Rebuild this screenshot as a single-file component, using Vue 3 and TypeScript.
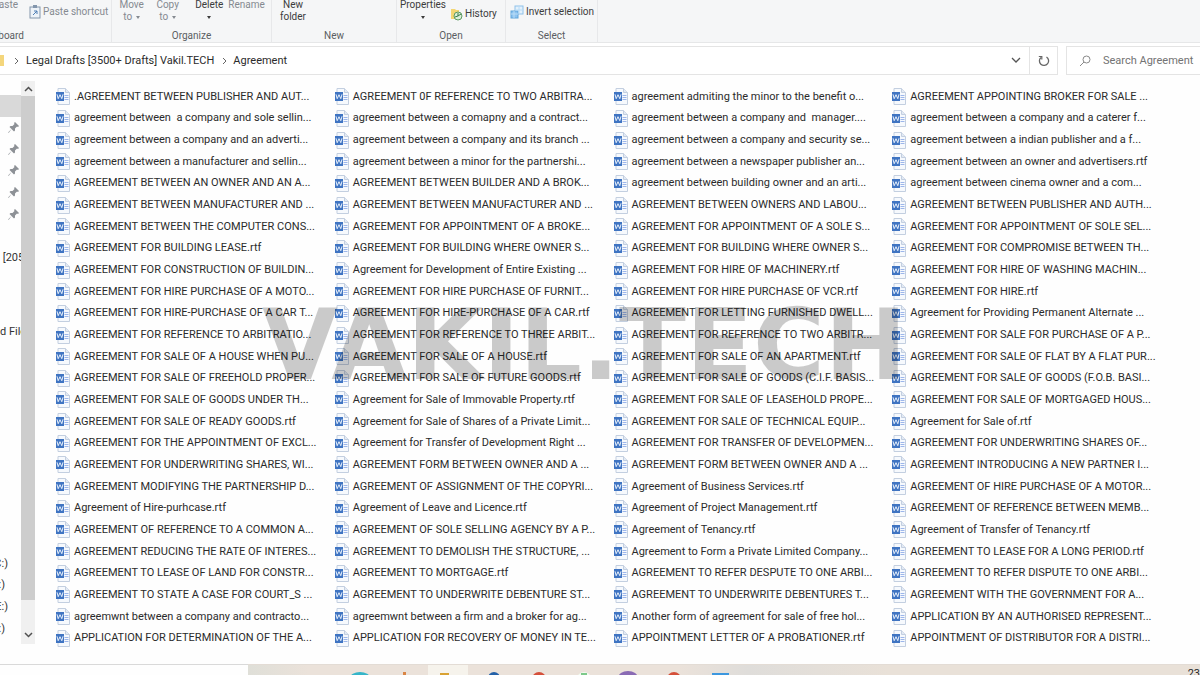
<script setup lang="ts">
import { ref } from 'vue'

const search = ref('')

const columns: string[][] = [
  [
    '.AGREEMENT BETWEEN PUBLISHER AND AUT...',
    'agreement between  a company and sole sellin...',
    'agreement between a company and an adverti...',
    'agreement between a manufacturer and sellin...',
    'AGREEMENT BETWEEN AN OWNER AND AN A...',
    'AGREEMENT BETWEEN MANUFACTURER AND ...',
    'AGREEMENT BETWEEN THE COMPUTER CONS...',
    'AGREEMENT FOR BUILDING LEASE.rtf',
    'AGREEMENT FOR CONSTRUCTION OF BUILDIN...',
    'AGREEMENT FOR HIRE PURCHASE OF A MOTO...',
    'AGREEMENT FOR HIRE-PURCHASE OF A CAR T...',
    'AGREEMENT FOR REFERENCE TO ARBITRATIO...',
    'AGREEMENT FOR SALE OF A HOUSE WHEN PU...',
    'AGREEMENT FOR SALE OF FREEHOLD PROPER...',
    'AGREEMENT FOR SALE OF GOODS UNDER TH...',
    'AGREEMENT FOR SALE OF READY GOODS.rtf',
    'AGREEMENT FOR THE APPOINTMENT OF EXCL...',
    'AGREEMENT FOR UNDERWRITING SHARES, WI...',
    'AGREEMENT MODIFYING THE PARTNERSHIP D...',
    'Agreement of Hire-purhcase.rtf',
    'AGREEMENT OF REFERENCE TO A COMMON A...',
    'AGREEMENT REDUCING THE RATE OF INTERES...',
    'AGREEMENT TO LEASE OF LAND FOR CONSTR...',
    'AGREEMENT TO STATE A CASE FOR COURT_S ...',
    'agreemwnt between a company and contracto...',
    'APPLICATION FOR DETERMINATION OF THE A...',
  ],
  [
    'AGREEMENT 0F REFERENCE TO TWO ARBITRA...',
    'agreement between a comapny and a contract...',
    'agreement between a company and its branch ...',
    'agreement between a minor for the partnershi...',
    'AGREEMENT BETWEEN BUILDER AND A BROK...',
    'AGREEMENT BETWEEN MANUFACTURER AND ...',
    'AGREEMENT FOR APPOINTMENT OF A BROKE...',
    'AGREEMENT FOR BUILDING WHERE OWNER S...',
    'Agreement for Development of Entire Existing ...',
    'AGREEMENT FOR HIRE PURCHASE OF FURNIT...',
    'AGREEMENT FOR HIRE-PURCHASE OF A CAR.rtf',
    'AGREEMENT FOR REFERENCE TO THREE ARBIT...',
    'AGREEMENT FOR SALE OF A HOUSE.rtf',
    'AGREEMENT FOR SALE OF FUTURE GOODS.rtf',
    'Agreement for Sale of Immovable Property.rtf',
    'Agreement for Sale of Shares of a Private Limit...',
    'Agreement for Transfer of Development Right ...',
    'AGREEMENT FORM BETWEEN OWNER AND A ...',
    'AGREEMENT OF ASSIGNMENT OF THE COPYRI...',
    'Agreement of Leave and Licence.rtf',
    'AGREEMENT OF SOLE SELLING AGENCY BY A P...',
    'AGREEMENT TO DEMOLISH THE STRUCTURE, ...',
    'AGREEMENT TO MORTGAGE.rtf',
    'AGREEMENT TO UNDERWRITE DEBENTURE ST...',
    'agreemwnt between a firm and a broker for ag...',
    'APPLICATION FOR RECOVERY OF MONEY IN TE...',
  ],
  [
    'agreement admiting the minor to the benefit o...',
    'agreement between a company and  manager....',
    'agreement between a company and security se...',
    'agreement between a newspaper publisher an...',
    'agreement between building owner and an arti...',
    'AGREEMENT BETWEEN OWNERS AND LABOU...',
    'AGREEMENT FOR APPOINTMENT OF A SOLE S...',
    'AGREEMENT FOR BUILDING WHERE OWNER S...',
    'AGREEMENT FOR HIRE OF MACHINERY.rtf',
    'AGREEMENT FOR HIRE PURCHASE OF VCR.rtf',
    'AGREEMENT FOR LETTING FURNISHED DWELL...',
    'AGREEMENT FOR REFERENCE TO TWO ARBITR...',
    'AGREEMENT FOR SALE OF AN APARTMENT.rtf',
    'AGREEMENT FOR SALE OF GOODS (C.I.F. BASIS...',
    'AGREEMENT FOR SALE OF LEASEHOLD PROPE...',
    'AGREEMENT FOR SALE OF TECHNICAL EQUIP...',
    'AGREEMENT FOR TRANSFER OF DEVELOPMEN...',
    'AGREEMENT FORM BETWEEN OWNER AND A ...',
    'Agreement of Business Services.rtf',
    'Agreement of Project Management.rtf',
    'Agreement of Tenancy.rtf',
    'Agreement to Form a Private Limited Company...',
    'AGREEMENT TO REFER DESPUTE TO ONE ARBI...',
    'AGREEMENT TO UNDERWRITE DEBENTURES T...',
    'Another form of agreement for sale of free hol...',
    'APPOINTMENT LETTER OF A PROBATIONER.rtf',
  ],
  [
    'AGREEMENT APPOINTING BROKER FOR SALE ...',
    'agreement between a company and a caterer f...',
    'agreement between a indian publisher and a f...',
    'agreement between an owner and advertisers.rtf',
    'agreement between cinema owner and a com...',
    'AGREEMENT BETWEEN PUBLISHER AND AUTH...',
    'AGREEMENT FOR APPOINTMENT OF SOLE SEL...',
    'AGREEMENT FOR COMPROMISE BETWEEN TH...',
    'AGREEMENT FOR HIRE OF WASHING MACHIN...',
    'AGREEMENT FOR HIRE.rtf',
    'Agreement for Providing Permanent Alternate ...',
    'AGREEMENT FOR SALE FOR PURCHASE OF A P...',
    'AGREEMENT FOR SALE OF FLAT BY A FLAT PUR...',
    'AGREEMENT FOR SALE OF GOODS (F.O.B. BASI...',
    'AGREEMENT FOR SALE OF MORTGAGED HOUS...',
    'Agreement for Sale of.rtf',
    'AGREEMENT FOR UNDERWRITING SHARES OF...',
    'AGREEMENT INTRODUCING A NEW PARTNER I...',
    'AGREEMENT OF HIRE PURCHASE OF A MOTOR...',
    'AGREEMENT OF REFERENCE BETWEEN MEMB...',
    'Agreement of Transfer of Tenancy.rtf',
    'AGREEMENT TO LEASE FOR A LONG PERIOD.rtf',
    'AGREEMENT TO REFER DISPUTE TO ONE ARBI...',
    'AGREEMENT WITH THE GOVERNMENT FOR A...',
    'APPLICATION BY AN AUTHORISED REPRESENT...',
    'APPOINTMENT OF DISTRIBUTOR FOR A DISTRI...',
  ],
]

const drives: string[] = ['C:)', ':)', 'E:)', ':)']
</script>

<template>
  <div class="window">
    <header class="ribbon">
      <section class="group clipboard">
        <div class="tools">
          <button class="tool paste dim">Paste</button>
          <button class="tool row dim">
            <svg width="12" height="14" viewBox="0 0 12 14">
              <rect x="1" y="2" width="10" height="11" fill="#eef3f8" stroke="#8396ac" />
              <rect x="4" y="0" width="4" height="3" fill="#8396ac" />
              <path d="M4 10l4-4M5 6h3v3" fill="none" stroke="#4f7fb5" />
            </svg>
            Paste shortcut
          </button>
        </div>
        <h2 class="caption">Clipboard</h2>
      </section>
      <section class="group organize">
        <div class="tools">
          <button class="tool dim">Move<span>to <i class="caret"></i></span></button>
          <button class="tool dim">Copy<span>to <i class="caret"></i></span></button>
          <button class="tool">Delete<span><i class="caret"></i></span></button>
          <button class="tool dim">Rename</button>
        </div>
        <h2 class="caption">Organize</h2>
      </section>
      <section class="group new">
        <div class="tools">
          <button class="tool">New<span>folder</span></button>
        </div>
        <h2 class="caption">New</h2>
      </section>
      <section class="group open">
        <div class="tools">
          <button class="tool">Properties<span><i class="caret"></i></span></button>
          <button class="tool row low">
            <svg width="13" height="14" viewBox="0 0 13 14">
              <path d="M1 2h4l1 1h3v9H1z" fill="#f3d673" />
              <circle cx="8" cy="9" r="4" fill="#dcefd9" stroke="#5d9b63" />
              <path d="M8 6v3l-3 1M8 9l3-2" fill="none" stroke="#397d49" />
            </svg>
            History
          </button>
        </div>
        <h2 class="caption">Open</h2>
      </section>
      <section class="group select">
        <div class="tools">
          <button class="tool row">
            <svg width="14" height="14" viewBox="0 0 14 14">
              <rect x="5" y="1" width="8" height="8" fill="#e3f1fc" stroke="#8fc1ea" />
              <rect x="1" y="6" width="7" height="7" fill="#8dc3ef" stroke="#60a5dc" />
              <path d="M9 1v8M5 5h8M4 6v7M1 9h7" stroke="#b9dcf7" />
            </svg>
            Invert selection
          </button>
        </div>
        <h2 class="caption">Select</h2>
      </section>
    </header>

    <div class="location">
      <nav class="address" aria-label="Address">
        <i class="folder"></i>
        <svg class="sep" width="5" height="8" viewBox="0 0 5 8"><path d="M1 1l3 3-3 3" /></svg>
        <a href="#">Legal Drafts [3500+ Drafts] Vakil.TECH</a>
        <svg class="sep" width="5" height="8" viewBox="0 0 5 8"><path d="M1 1l3 3-3 3" /></svg>
        <a href="#">Agreement</a>
        <button class="drop" aria-label="Previous locations">
          <svg width="10" height="7" viewBox="0 0 10 7"><path d="M1 1l4 4 4-4" fill="none" stroke="#555" stroke-width="1.3" /></svg>
        </button>
        <button class="refresh" aria-label="Refresh">
          <svg width="12" height="12" viewBox="0 0 12 12">
            <path d="M8.500 2A4.600 4.600 0 1 1 3 2.400" fill="none" stroke="#666" stroke-width="1.300" />
            <path d="M0.800 1.500h3v3" fill="none" stroke="#666" stroke-width="1.200" />
          </svg>
        </button>
      </nav>
      <label class="search">
        <svg width="12" height="12" viewBox="0 0 12 12">
          <circle cx="7.500" cy="4.500" r="3.500" fill="none" stroke="#8a8a8a" />
          <path d="M5 7L1 11" stroke="#8a8a8a" />
        </svg>
        <input v-model="search" type="text" placeholder="Search Agreement" aria-label="Search Agreement" />
      </label>
    </div>

    <main class="content">
      <aside class="tree">
        <div class="node picked"></div>
        <div v-for="n in 5" :key="n" class="node pin">
          <svg width="11" height="11" viewBox="0 0 11 11">
            <path d="M7 0l4 4-1 1-1-.500-2 2 0 2-1 1-2.500-2.500L1 10.500 0 11l.500-1L3.500 7 1.500 5l1-1 2 0 2-2L6 1z" fill="#8d9196" />
          </svg>
        </div>
        <div class="node"></div>
        <div class="node">&nbsp;[205</div>
        <div class="space upper"></div>
        <div class="node">d File</div>
        <div class="space lower"></div>
        <div v-for="(d, i) in drives" :key="i" class="node drive" :class="{ wide: d.length > 2 }">{{ d }}</div>
      </aside>

      <div class="scroll">
        <button aria-label="Scroll up">
          <svg width="9" height="6" viewBox="0 0 9 6"><path d="M1 5l3.500-3.500L8 5" fill="none" stroke="#505050" stroke-width="1.500" /></svg>
        </button>
        <div class="thumb"></div>
        <div class="track"></div>
        <button aria-label="Scroll down">
          <svg width="9" height="6" viewBox="0 0 9 6"><path d="M1 1l3.500 3.500L8 1" fill="none" stroke="#505050" stroke-width="1.500" /></svg>
        </button>
      </div>

      <div class="files">
        <ul v-for="(column, c) in columns" :key="c">
          <li v-for="(name, r) in column" :key="r">
            <svg width="15" height="17" viewBox="0 0 15 17">
              <path d="M3 .500h7.500l4 4v12H3z" fill="#f6f9fd" stroke="#c3cfe0" />
              <path d="M10.500 .500v4h4" fill="#e3eaf4" stroke="#c3cfe0" />
              <path d="M9.500 7.500h4M9.500 9.500h4M9.500 11.500h4" stroke="#9db6ea" />
              <rect x="1" y="4" width="8" height="9" fill="#3f74c2" />
              <path d="M2 6.300l1.200 4.400 1.800-4 1.800 4 1.200-4.400" fill="none" stroke="#e8f0fb" />
            </svg>
            <span>{{ name }}</span>
          </li>
        </ul>
        <div class="watermark">VAKIL.TECH</div>
      </div>
    </main>

    <footer class="taskbar">
      <div class="blank"></div>
      <div class="apps">
        <svg width="520" height="10" viewBox="0 0 520 10">
          <rect x="180" width="40" height="10" fill="#f6f3ec" />
          <ellipse cx="112" cy="13" rx="10" ry="6" fill="#35b5c9" />
          <rect x="155" y="7" width="3" height="3" fill="#d98545" />
          <rect x="192" y="8" width="9" height="2" fill="#d9a233" />
          <circle cx="246" cy="13" r="6" fill="#2461a8" />
          <circle cx="291" cy="14" r="7" fill="#d5503a" />
          <circle cx="336" cy="14" r="7" fill="#f3fbf1" />
          <rect x="333" y="8" width="6" height="2" fill="#7dc98a" />
          <ellipse cx="380" cy="13" rx="10" ry="7" fill="#8a6bb4" />
          <circle cx="426" cy="14" r="7" fill="#d5503a" />
          <rect x="464" y="8" width="17" height="2" fill="#3c97df" />
        </svg>
        <time>23</time>
      </div>
    </footer>
  </div>
</template>

<style>
body {
  margin: 0;
  background: #fff;
}
</style>

<style scoped>
.window {
  display: flex;
  flex-direction: column;
  height: 100vh;
  overflow: hidden;
  background: #fefefe;
  color: #2b2b2b;
  font-family: Roboto, "Open Sans", sans-serif;
  font-size: 11px;
}

button {
  margin: 0;
  padding: 0;
  border: 0;
  background: none;
  color: inherit;
  font: inherit;
}

svg {
  display: block;
  flex: none;
}

.ribbon {
  display: flex;
  flex: none;
  height: 42px;
  border-bottom: 1px solid #e6e7e8;
  background: #f5f6f7;
  color: #3c3c3c;
  font-size: 10px;
}

.group {
  display: flex;
  flex-direction: column;
  justify-content: space-between;
  box-sizing: border-box;
  overflow: hidden;
  border-right: 1px solid #e7e8ea;
}

.clipboard { width: 112px; }
.organize { width: 160px; }
.new { width: 125px; }
.open { width: 109px; }
.select { width: 92px; }

.tools {
  display: flex;
  align-items: flex-start;
  margin-top: -1px;
  line-height: 12px;
  white-space: nowrap;
}

.tool {
  display: flex;
  flex-direction: column;
  align-items: center;
}

.tool span {
  display: flex;
  align-items: center;
  gap: 4px;
  height: 12px;
}

.row {
  flex-direction: row;
  gap: 2px;
  padding-top: 6px;
}

.low { padding-top: 8px; }
.dim { color: #858a91; }

.paste {
  align-items: flex-end;
  width: 18px;
  margin-right: 11px;
}

.organize .tools {
  justify-content: center;
  gap: 9px;
}

.organize .tool { min-width: 27px; }

.organize .tool:nth-child(3) { margin-left: 5px; }
.organize .tool:nth-child(4) { margin-left: -4px; }
.new .tools { padding-left: 8px; }

.open .tools {
  gap: 4px;
  padding-left: 3px;
}

.select .tools { padding-left: 4px; }

.caret {
  border: 2px solid transparent;
  border-top: 3px solid currentColor;
  border-bottom: 0;
}

.caption {
  margin: 0;
  color: #5b5e62;
  font-size: 10px;
  font-weight: 400;
  line-height: 13px;
  text-align: center;
}

.clipboard .caption {
  display: flex;
  justify-content: flex-end;
  width: 24px;
}

.location {
  display: flex;
  flex: none;
  gap: 8px;
  height: 29px;
  padding-top: 3px;
  background: #fff;
}

.address {
  display: flex;
  flex: 1;
  align-items: center;
  border: 1px solid #e4e4e4;
  border-left: 0;
}

.address a {
  color: inherit;
  line-height: 15px;
  text-decoration: none;
  white-space: nowrap;
}

.folder {
  width: 4px;
  height: 11px;
  background: #f4d67c;
}

.sep {
  margin: 0 6px 0 8px;
  fill: none;
  stroke: #666;
}

.sep:first-of-type {
  margin: 0 7px 0 10px;
}

.drop {
  margin-left: auto;
  padding: 0 8px;
}

.refresh {
  display: flex;
  align-items: center;
  justify-content: center;
  width: 28px;
  height: 100%;
  border-left: 1px solid #e4e4e4;
}

.search {
  display: flex;
  align-items: center;
  gap: 12px;
  box-sizing: border-box;
  width: 134px;
  padding-left: 12px;
  border: 1px solid #e4e4e4;
  border-right: 0;
}

.search input {
  flex: 1;
  min-width: 0;
  padding: 0;
  border: 0;
  outline: 0;
  background: none;
  color: inherit;
  font: inherit;
}

.search input::placeholder {
  color: #737373;
  opacity: 1;
}

.content {
  display: flex;
  flex: 1;
  min-height: 0;
  padding: 6px 0 20px;
}

.tree {
  display: flex;
  flex-direction: column;
  width: 21px;
  padding: 14px 0 5px;
  overflow: hidden;
  color: #333;
  white-space: nowrap;
}

.node {
  display: flex;
  flex: 1;
  align-items: center;
}

.picked { background: #d9d9d9; }

.pin { padding-left: 8px; }
.drive { justify-content: flex-end; width: 5px; }
.wide { width: 8px; }
.upper { flex: 2.4; }
.lower { flex: 9.7; }

.scroll {
  display: flex;
  flex-direction: column;
  width: 14px;
  background: #f0f0f0;
}

.scroll button {
  display: flex;
  align-items: center;
  justify-content: center;
  height: 15px;
}

.thumb {
  flex: 20;
  background: #cdcdcd;
}

.track { flex: 1; }

.scroll button:last-child { height: 19px; }

.files {
  position: relative;
  display: grid;
  flex: 1;
  grid-template-columns: repeat(4, 1fr);
  margin: 5px 30px -5px 20px;
}

.files ul {
  display: grid;
  grid-auto-rows: 1fr;
  margin: 0;
  padding: 0;
  list-style: none;
}

.files li {
  display: flex;
  align-items: center;
  gap: 4px;
  min-width: 0;
  min-height: 0;
  line-height: 16px;
  white-space: pre;
}

.watermark {
  position: absolute;
  top: 204px;
  left: 207px;
  color: #000;
  font-family: "DejaVu Sans", sans-serif;
  font-size: 98px;
  font-weight: 700;
  line-height: 110px;
  opacity: 0.2;
  pointer-events: none;
}

.taskbar {
  display: flex;
  flex: none;
  height: 11px;
}

.blank {
  box-sizing: border-box;
  width: 248px;
  border-top: 1px solid #d9d9d9;
}

.apps {
  display: flex;
  flex: 1;
  align-items: flex-start;
  justify-content: space-between;
  overflow: hidden;
  border-top: 1px solid #e3dcd5;
  background: linear-gradient(90deg, #dfdfd8, #ebe2da 60px, #ebe2da 430px, #dfddda 500px, #e9e1d8 640px);
}

.apps time {
  padding-top: 1px;
  font-size: 11px;
  line-height: 16px;
}
</style>
